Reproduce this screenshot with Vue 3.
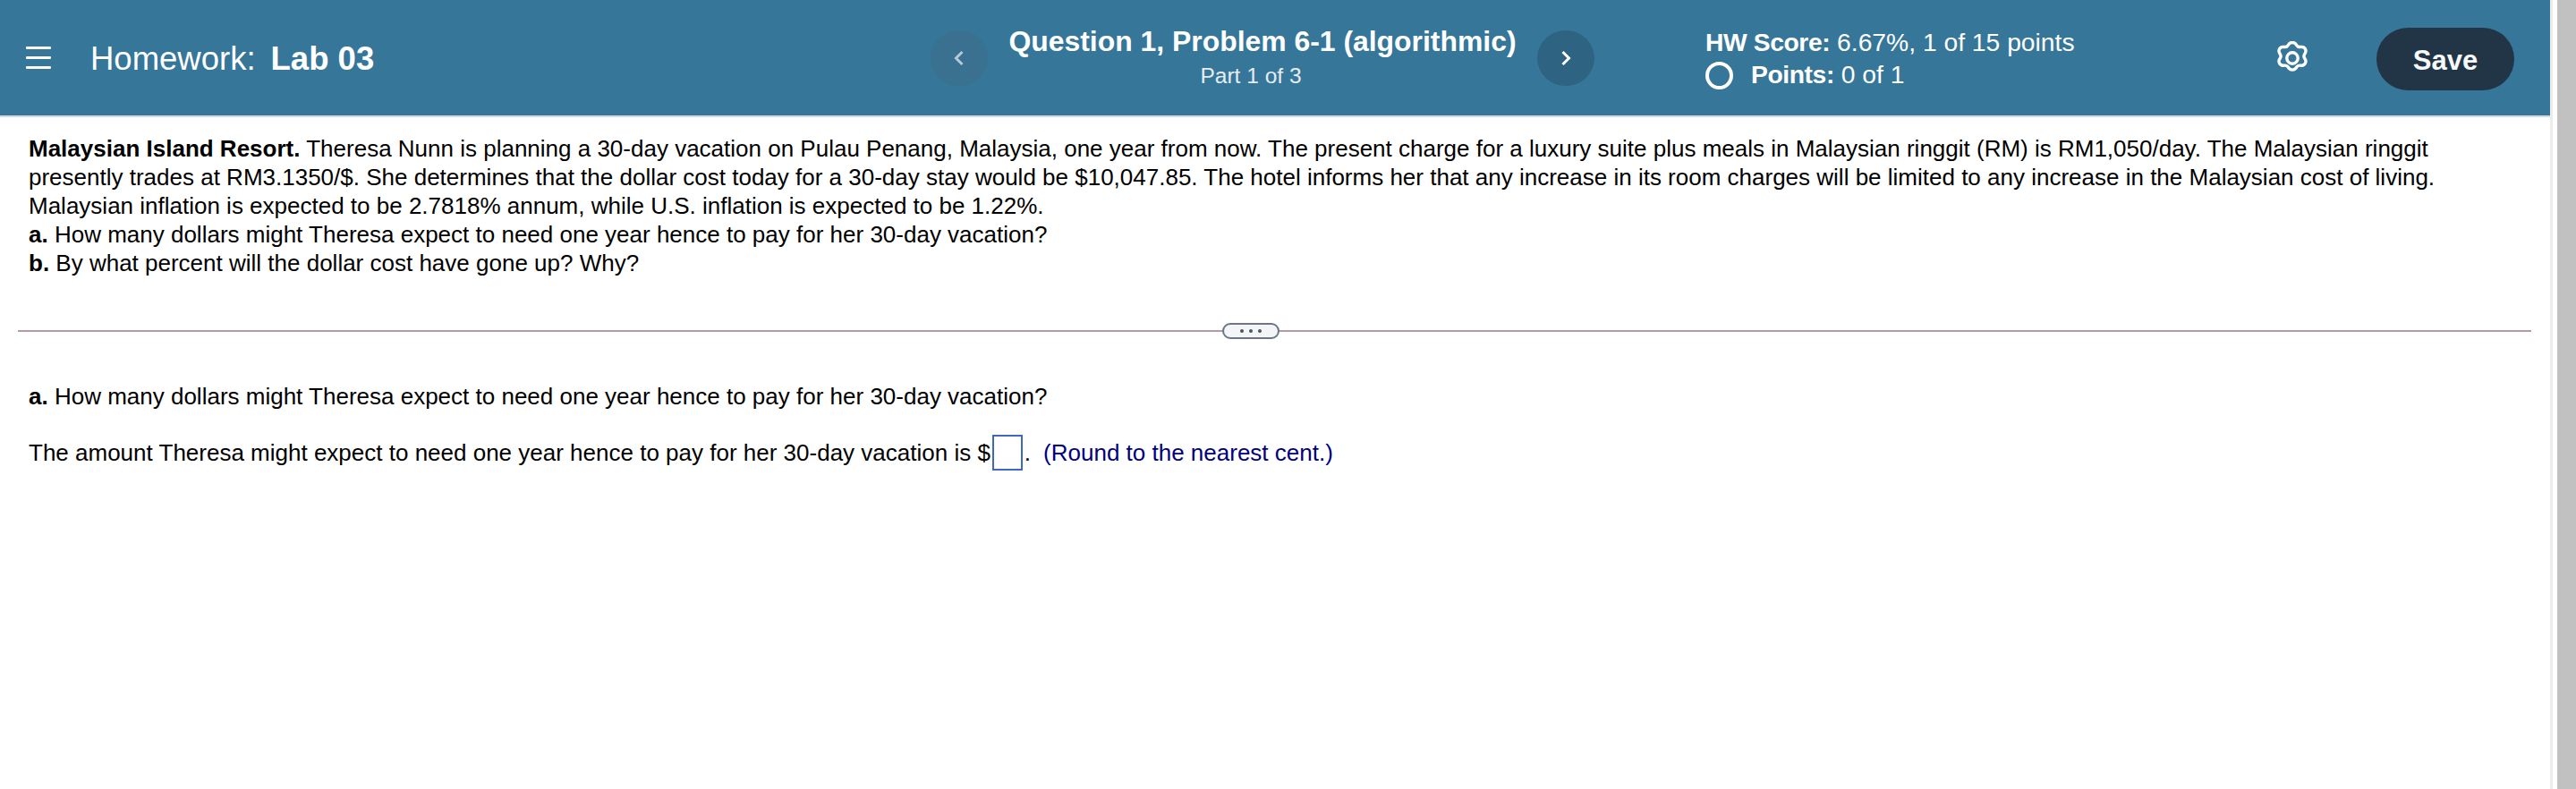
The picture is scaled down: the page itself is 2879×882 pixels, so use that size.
<script setup>
const dots = [0, 1, 2]
</script>

<template>
  <div class="page">
    <div class="main">
      <header class="bar">
        <div class="left">
          <button class="menu" aria-label="Menu"><span></span><span></span><span></span></button>
          <div class="hw">Homework:<b>Lab 03</b></div>
        </div>
        <div class="center">
          <button class="nav prev" aria-label="Previous">
            <svg width="14" height="24" viewBox="0 0 14 24"><path d="M10.5 5 3.5 12 10.5 19" /></svg>
          </button>
          <div class="title">
            <div class="q">Question 1, Problem 6-1 (algorithmic)</div>
            <div class="part">Part 1 of 3</div>
          </div>
          <button class="nav next" aria-label="Next">
            <svg width="14" height="24" viewBox="0 0 14 24"><path d="M3.5 5 10.5 12 3.5 19" /></svg>
          </button>
        </div>
        <div class="score">
          <div><b>HW Score:</b> 6.67%, 1 of 15 points</div>
          <div class="pts"><i class="radio"></i><span><b>Points:</b> 0 of 1</span></div>
        </div>
        <svg class="gear" width="36" height="38" viewBox="0 0 36 38" fill="none">
          <path d="M14.2 3.2a5 5 0 0 1 7.6 0l.9 1.4a4 4 0 0 0 3.6 1.9l2.2-.1a4.6 4.6 0 0 1 3.9 6.8l-.9 1.6a4 4 0 0 0 0 4l.9 1.6a4.6 4.6 0 0 1-3.9 6.8l-2.2-.1a4 4 0 0 0-3.6 1.9l-.9 1.4a5 5 0 0 1-7.6 0l-.9-1.4a4 4 0 0 0-3.6-1.9l-2.2.1a4.6 4.6 0 0 1-3.9-6.8l.9-1.6a4 4 0 0 0 0-4l-.9-1.6a4.6 4.6 0 0 1 3.9-6.8l2.2.1a4 4 0 0 0 3.6-1.9z" />
          <circle cx="18" cy="19" r="6.2" />
        </svg>
        <button class="save">Save</button>
      </header>

      <main class="content">
        <p class="problem"><b>Malaysian Island Resort.</b> Theresa Nunn is planning a 30-day vacation on Pulau Penang, Malaysia, one year from now. The present charge for a luxury suite plus meals in Malaysian ringgit (RM) is RM1,050/day. The Malaysian ringgit<br />presently trades at RM3.1350/$. She determines that the dollar cost today for a 30-day stay would be $10,047.85. The hotel informs her that any increase in its room charges will be limited to any increase in the Malaysian cost of living.<br />Malaysian inflation is expected to be 2.7818% annum, while U.S. inflation is expected to be 1.22%.<br /><b>a.</b> How many dollars might Theresa expect to need one year hence to pay for her 30-day vacation?<br /><b>b.</b> By what percent will the dollar cost have gone up? Why?</p>

        <div class="divider">
          <button class="pill" aria-label="More"><i v-for="d in dots" :key="d"></i></button>
        </div>

        <p class="ask"><b>a.</b> How many dollars might Theresa expect to need one year hence to pay for her 30-day vacation?</p>
        <p class="answer">The amount Theresa might expect to need one year hence to pay for her 30-day vacation is $<span class="box"></span>.<span class="hint">(Round to the nearest cent.)</span></p>
      </main>
    </div>
    <aside class="gutter"></aside>
  </div>
</template>

<style>
html, body { margin: 0; background: #fff; }
</style>

<style scoped>
.page {
  display: flex;
  width: 2879px;
  height: 882px;
  overflow: hidden;
  font-family: "Liberation Sans", Arial, sans-serif;
  color: #000;
}
.main { width: 2850px; flex: none; }
.gutter {
  flex: 1;
  background: linear-gradient(to right, #ececec 3px, #fff 3px, #fff 8px, #c1c1c1 8px);
}
.bar {
  height: 129px;
  border-bottom: 2px solid #d3d8df;
  background: #367699;
  color: #fff;
  display: flex;
  align-items: center;
  position: relative;
}
button { border: 0; padding: 0; background: none; font: inherit; color: inherit; }
.left { display: flex; align-items: center; width: 1040px; flex: none; }
.menu {
  width: 28px;
  height: 25px;
  margin-left: 29px;
  margin-right: 44px;
  display: flex;
  flex-direction: column;
  justify-content: space-between;
}
.menu span { display: block; height: 3px; background: #fff; border-radius: 1px; }
.hw { font-size: 36.5px; padding-top: 3px; }
.hw b { margin-left: 17px; }
.center { display: flex; align-items: center; width: 742px; flex: none; justify-content: space-between; }
.nav {
  width: 64px;
  height: 62px;
  border-radius: 50%;
  display: flex;
  align-items: center;
  justify-content: center;
}
.nav path { fill: none; stroke: #fff; stroke-width: 3; }
.prev { background: #3a7090; }
.prev path { stroke: #b4cad8; }
.next { background: #2e6382; }
.title { text-align: center; margin-top: -3px; }
.q { font-size: 31.9px; font-weight: 700; line-height: 38px; }
.part { font-size: 24.5px; line-height: 30px; margin-top: 5px; margin-right: 26px; color: #e6edf2; }
.score { margin-left: 124px; width: 638px; flex: none; font-size: 28.25px; line-height: 36px; }
.score b { letter-spacing: -0.4px; }
.pts { display: flex; align-items: center; }
.radio {
  width: 31px;
  height: 31px;
  box-sizing: border-box;
  border: 4px solid #fff;
  border-radius: 50%;
  margin-top: 4px;
  margin-right: 20px;
}
.gear { flex: none; }
.gear path, .gear circle { stroke: #fff; stroke-width: 3.4; }
.save {
  position: absolute;
  left: 2656px;
  top: 31px;
  width: 154px;
  height: 70px;
  padding-top: 3px;
  border-radius: 35px;
  background: #213547;
  color: #f6f8fa;
  font-size: 31px;
  font-weight: 700;
}
.content { padding: 19px 20px 0; }
.problem, .ask, .answer {
  margin: 0;
  padding: 0 12px;
  font-size: 26px;
  line-height: 32px;
}
.divider {
  margin-top: 51px;
  height: 18px;
  position: relative;
  display: flex;
  justify-content: center;
  align-items: center;
}
.divider::before {
  content: "";
  position: absolute;
  left: 0;
  right: 1px;
  top: 8px;
  height: 2px;
  background: #b59aa5;
}
.pill {
  position: relative;
  left: -27px;
  width: 64px;
  height: 18px;
  box-sizing: border-box;
  border: 2px solid #6b7786;
  border-radius: 9px;
  background: #f3f5f7;
  display: flex;
  align-items: center;
  justify-content: center;
  gap: 6px;
}
.pill i { width: 4px; height: 4px; border-radius: 50%; background: #4b5563; }
.ask { margin-top: 48px; }
.answer { margin-top: 31px; }
.box {
  display: inline-block;
  box-sizing: border-box;
  width: 34px;
  height: 40px;
  border: 2px solid #3f69bf;
  vertical-align: middle;
  margin: -4px 2px 0 2px;
}
.hint { color: #000080; margin-left: 14px; }
</style>
